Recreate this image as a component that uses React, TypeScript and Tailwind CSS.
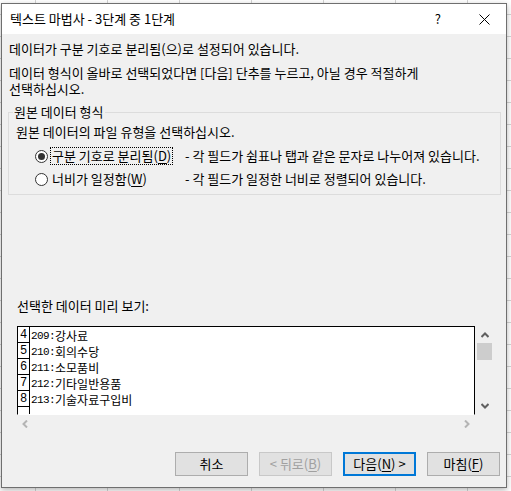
import React from 'react'

const ui = "font-['Noto_Sans_CJK_KR','Noto_Sans',sans-serif]"

const rows = [
	{ n: '4', code: '209:', name: '강사료' },
	{ n: '5', code: '210:', name: '회의수당' },
	{ n: '6', code: '211:', name: '소모품비' },
	{ n: '7', code: '212:', name: '기타일반용품' },
	{ n: '8', code: '213:', name: '기술자료구입비' },
	{ n: '', code: '', name: '' },
]

function Radio({ checked }: { checked?: boolean }) {
	return (
		<span className="flex h-[13px] w-[13px] shrink-0 items-center justify-center rounded-full border border-[#333] bg-white">
			{checked && <span className="h-[7px] w-[7px] rounded-full bg-[#333]" />}
		</span>
	)
}

function Button({ label, acc, tail, disabled, focused }: { label: string; acc?: string; tail?: string; disabled?: boolean; focused?: boolean }) {
	return (
		<div
			className={
				'flex h-[24px] w-[73px] items-center justify-center bg-[#e1e1e1] text-[13px] leading-4 ' +
				(focused ? 'border-2 border-[#0078d7] text-black' : disabled ? 'border border-[#c8c8c8] text-[#a0a0a0]' : 'border border-[#adadad] text-black')
			}
		>
			{label}
			{acc && (
				<>
					(<span className="underline underline-offset-2">{acc}</span>)
				</>
			)}
			{tail}
		</div>
	)
}

export default function App() {
	return (
		<div className="h-[491px] w-[511px] overflow-hidden bg-white bg-[linear-gradient(to_right,#d4d4d4_1px,transparent_1px),linear-gradient(to_bottom,#d4d4d4_1px,transparent_1px)] bg-[size:72px_22px] bg-[position:35px_14px]">
			<div className={`${ui} ml-[1px] mt-[3px] flex h-[485px] w-[506px] flex-col border border-[#6f6f6f] bg-[#f0f0f0] text-[13px] text-black shadow-[0_2px_6px_rgba(0,0,0,0.3)]`}>
				{/* 제목 표시줄 */}
				<div className="flex h-[30px] shrink-0 items-center bg-white">
					<span className="pl-[8px] leading-4">텍스트 마법사 - 3단계 중 1단계</span>
					<span className="ml-auto mr-[38px] leading-4">?</span>
					<svg width="11" height="11" viewBox="0 0 11 11" className="mr-[16px]">
						<path d="M0.5 0.5L10.5 10.5M10.5 0.5L0.5 10.5" stroke="#000" strokeWidth="1" />
					</svg>
				</div>

				<p className="ml-[7px] mt-[7px] h-4 leading-4">데이터가 구분 기호로 분리됨(으)로 설정되어 있습니다.</p>
				<p className="ml-[7px] mt-[8px] leading-4">
					데이터 형식이 올바로 선택되었다면 [다음] 단추를 누르고, 아닐 경우 적절하게
					<br />
					선택하십시오.
				</p>

				<fieldset className="ml-[6px] mt-[7px] w-[493px] border border-[#dcdcdc] pb-[6px] pl-[4px]">
					<legend className="px-[1px] leading-4">원본 데이터 형식</legend>
					<p className="ml-[3px] mt-[4px] h-4 leading-4">원본 데이터의 파일 유형을 선택하십시오.</p>
					<div className="ml-[22px] mt-[7px] flex h-[18px] items-center">
						<Radio checked />
						<span className="w-[137px] shrink-0">
							<span className="ml-[2px] inline-block border border-dotted border-black px-[1px] leading-4">
								구분 기호로 분리됨(<span className="underline underline-offset-2">D</span>)
							</span>
						</span>
						<span className="leading-4">- 각 필드가 쉼표나 탭과 같은 문자로 나누어져 있습니다.</span>
					</div>
					<div className="ml-[22px] mt-[5px] flex h-[18px] items-center">
						<Radio />
						<span className="w-[137px] shrink-0">
							<span className="ml-[2px] inline-block border border-transparent px-[1px] leading-4">
								너비가 일정함(<span className="underline underline-offset-2">W</span>)
							</span>
						</span>
						<span className="leading-4">- 각 필드가 일정한 너비로 정렬되어 있습니다.</span>
					</div>
				</fieldset>

				<p className="ml-[15px] mt-[103px] h-4 leading-4">선택한 데이터 미리 보기:</p>

				<div className="ml-[15px] mt-[12px] flex">
					<div className="flex flex-col">
						<div className="h-[89px] w-[458px] overflow-hidden border-x border-t border-b border-black border-b-white bg-white">
							{rows.map((r, i) => (
								<div key={i} className="flex h-[16px] items-end">
									<span className="flex h-[16px] w-[12px] shrink-0 items-end justify-center border-b border-r border-black font-['Liberation_Mono',monospace] text-[12px] leading-[14px]">
										{r.n}
									</span>
									<span className="pl-[1px] font-['Liberation_Mono',monospace] text-[11px] leading-[14px] tracking-[-0.6px]">{r.code}</span>
									<span className="text-[12px] leading-[15px]">{r.name}</span>
								</div>
							))}
						</div>
						<div className="flex h-[17px] w-[458px] items-center justify-between px-[5px]">
							<svg width="6" height="8" viewBox="0 0 6 8">
								<path d="M5 0.5L1.5 4L5 7.5" stroke="#b4b4b4" strokeWidth="2" fill="none" />
							</svg>
							<svg width="6" height="8" viewBox="0 0 6 8">
								<path d="M1 0.5L4.5 4L1 7.5" stroke="#b4b4b4" strokeWidth="2" fill="none" />
							</svg>
						</div>
					</div>
					<div className="ml-[1px] flex h-[89px] w-[17px] flex-col items-center">
						<svg width="8" height="6" viewBox="0 0 8 6" className="mt-[6px]">
							<path d="M0.5 5L4 1.5L7.5 5" stroke="#606060" strokeWidth="2" fill="none" />
						</svg>
						<div className="mt-[5px] h-[17px] w-[15px] bg-[#cdcdcd]" />
						<svg width="8" height="6" viewBox="0 0 8 6" className="mt-auto mb-[6px]">
							<path d="M0.5 1L4 4.5L7.5 1" stroke="#606060" strokeWidth="2" fill="none" />
						</svg>
					</div>
				</div>

				<div className="mt-[20px] flex justify-end gap-[11px] pr-[6px]">
					<Button label="취소" />
					<Button label="< 뒤로" acc="B" disabled />
					<Button label="다음" acc="N" tail=" >" focused />
					<Button label="마침" acc="F" />
				</div>
			</div>
		</div>
	)
}
